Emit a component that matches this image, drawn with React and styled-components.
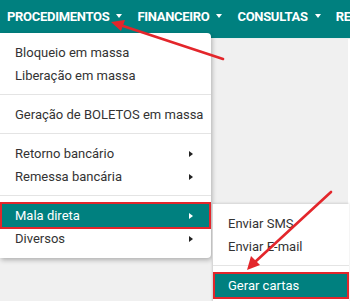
import React from "react";
import styled, { createGlobalStyle } from "styled-components";

const GlobalStyle = createGlobalStyle`
  html, body {
    margin: 0;
    padding: 0;
    background: #ffffff;
    font-family: Roboto, "Noto Sans", "Liberation Sans", sans-serif;
  }
`;

const TEAL = "#00807f";
const RED = "#e3262b";

const navItems = ["PROCEDIMENTOS", "FINANCEIRO", "CONSULTAS", "RELATÓRIOS"];

const mainMenu = [
  { label: "Bloqueio em massa" },
  { label: "Liberação em massa" },
  { divider: true },
  { label: "Geração de BOLETOS em massa" },
  { divider: true },
  { label: "Retorno bancário", sub: true },
  { label: "Remessa bancária", sub: true },
  { divider: true },
  { label: "Mala direta", sub: true, active: true, open: true },
  { label: "Diversos", sub: true },
];

const maladireta = [
  { label: "Enviar SMS" },
  { label: "Enviar E-mail" },
  { divider: true },
  { label: "Gerar cartas", active: true },
];

function App() {
  return (
    <Page>
      <GlobalStyle />
      <NavBar>
        {navItems.map((name) => (
          <NavItem key={name}>
            {name}
            <Caret />
          </NavItem>
        ))}
      </NavBar>
      <Content />

      <Dropdown>
        {mainMenu.map((item, i) =>
          item.divider ? (
            <Divider key={i} />
          ) : (
            <MenuItem key={i} active={item.active}>
              {item.label}
              {item.sub && <SubArrow active={item.active} />}
              {item.open && (
                <SubMenu>
                  {maladireta.map((s, j) =>
                    s.divider ? (
                      <Divider key={j} />
                    ) : (
                      <MenuItem key={j} active={s.active} wide>
                        {s.label}
                      </MenuItem>
                    )
                  )}
                </SubMenu>
              )}
            </MenuItem>
          )
        )}
      </Dropdown>

      <Annotations width="350" height="301" viewBox="0 0 350 301">
        <line x1="223" y1="59" x2="120" y2="25" stroke={RED} strokeWidth="2.6" strokeLinecap="round" />
        <polygon points="111,22 125,20 121,31" fill={RED} />
        <line x1="331" y1="192" x2="255" y2="262" stroke={RED} strokeWidth="2.6" strokeLinecap="round" />
        <polygon points="247,270 251,256 260,265" fill={RED} />
      </Annotations>
    </Page>
  );
}

const Page = styled.div`
  position: relative;
  width: 350px;
  height: 301px;
  overflow: hidden;
  display: flex;
  flex-direction: column;
`;

const NavBar = styled.nav`
  height: 39px;
  flex: none;
  background: ${TEAL};
  display: flex;
  align-items: flex-start;
  padding: 8px 0 0 7px;
  box-sizing: border-box;
  white-space: nowrap;
  overflow: hidden;
  border-bottom: 1px solid #e8eeee;
`;

const NavItem = styled.div`
  display: flex;
  align-items: center;
  gap: 7px;
  height: 16px;
  margin-right: 15px;
  color: #ffffff;
  font-weight: 700;
  font-size: 13px;
  letter-spacing: -0.3px;
`;

const Caret = styled.span`
  width: 0;
  height: 0;
  border-left: 3.5px solid transparent;
  border-right: 3.5px solid transparent;
  border-top: 4px solid #ffffff;
`;

const Content = styled.main`
  flex: 1;
  background: #f0f0f0;
  margin-right: 2px;
`;

const Dropdown = styled.div`
  position: absolute;
  left: 0;
  top: 33px;
  width: 211px;
  padding: 8px 0;
  background: #ffffff;
  border-radius: 0 4px 4px 0;
  box-shadow: 1px 2px 5px rgba(0, 0, 0, 0.28);
  z-index: 2;
`;

const MenuItem = styled.div`
  position: relative;
  height: 23px;
  padding: 0 ${({ wide }) => (wide ? "15px" : "18px")} 0 15px;
  display: flex;
  align-items: center;
  justify-content: space-between;
  font-size: 13px;
  color: ${({ active }) => (active ? "#ffffff" : "#333333")};
  background: ${({ active }) => (active ? TEAL : "transparent")};
  white-space: nowrap;

  ${({ active }) =>
    active &&
    `
    &::after {
      content: "";
      position: absolute;
      left: 0;
      right: 0;
      top: -2px;
      bottom: -2px;
      border: 2px solid ${RED};
      pointer-events: none;
    }
  `}
`;

const SubArrow = styled.span`
  width: 0;
  height: 0;
  border-top: 3.5px solid transparent;
  border-bottom: 3.5px solid transparent;
  border-left: 4px solid ${({ active }) => (active ? "#ffffff" : "#222222")};
`;

const Divider = styled.div`
  height: 1px;
  background: #e4e4e4;
  margin: 7px 0 8px;
`;

const SubMenu = styled.div`
  position: absolute;
  top: 0;
  left: calc(100% + 1px);
  width: 136px;
  padding: 8px 0;
  background: #ffffff;
  border-left: 1px solid #d8d8d8;
  box-shadow: 0 -1px 2px rgba(0, 0, 0, 0.12);
  color: #333333;
`;

const Annotations = styled.svg`
  position: absolute;
  left: 0;
  top: 0;
  pointer-events: none;
  z-index: 5;
`;

export default App;
